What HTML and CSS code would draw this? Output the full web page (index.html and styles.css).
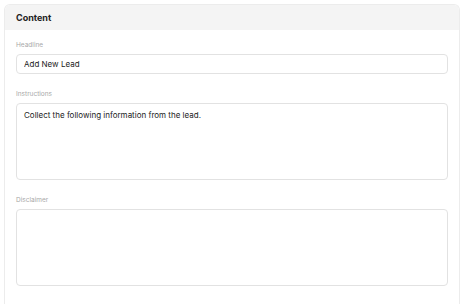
FILE: index.html
```html
<!DOCTYPE html>
<html lang="en">
<head>
    <meta charset="UTF-8">
    <meta name="viewport" content="width=device-width, initial-scale=1.0">
    <title>Content</title>
    <link rel="stylesheet" href="styles.css">
</head>
<body>
    <div class="card">
        <div class="card-header">Content</div>
        <div class="card-body">
            <div class="field">
                <label for="headline">Headline</label>
                <input type="text" id="headline" value="Add New Lead">
            </div>
            <div class="field">
                <label for="instructions">Instructions</label>
                <textarea id="instructions">Collect the following information from the lead.</textarea>
            </div>
            <div class="field">
                <label for="disclaimer">Disclaimer</label>
                <textarea id="disclaimer"></textarea>
            </div>
        </div>
    </div>
</body>
</html>
```

FILE: styles.css
```css
body {
    font-family: Inter, "Noto Sans", sans-serif;
    background-color: #fff;
    margin: 0;
    padding: 4px 5px 0 4px;
    height: 300px;
    overflow: hidden;
}

.card {
    border: 1px solid #ececec;
    border-bottom: none;
    border-radius: 6px 6px 0 0;
    height: 300px;
    box-sizing: border-box;
    overflow: hidden;
}

.card-header {
    background: #f4f4f4;
    height: 25px;
    line-height: 25px;
    padding-left: 11px;
    font-size: 9px;
    font-weight: 700;
    color: #222;
}

.card-body {
    padding: 11px 11px 0 11px;
}

.field {
    margin-bottom: 16px;
}

label {
    display: block;
    font-size: 6.5px;
    line-height: 8px;
    color: #a8a8a8;
    margin-bottom: 5px;
}

input,
textarea {
    display: block;
    width: 100%;
    box-sizing: border-box;
    border: 1px solid #e2e2e2;
    border-radius: 4px;
    font-family: Inter, "Noto Sans", sans-serif;
    font-size: 8px;
    color: #222;
    padding: 0 7px;
    outline: none;
    resize: none;
    background: #fff;
}

input {
    height: 20px;
}

textarea {
    height: 77px;
    padding-top: 6px;
}
```
